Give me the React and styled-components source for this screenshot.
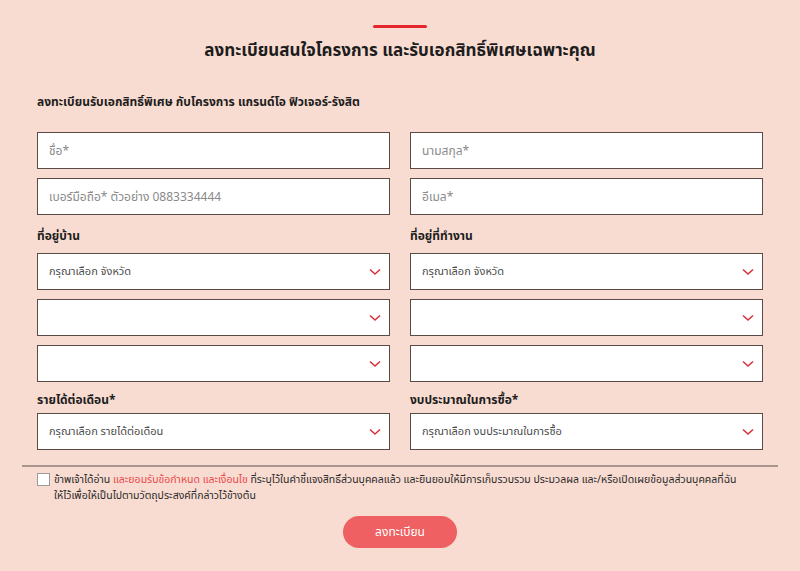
import styled, { createGlobalStyle } from 'styled-components';

const GlobalStyle = createGlobalStyle`
  html, body {
    margin: 0;
    padding: 0;
    background: #f9dcd1;
  }
  body {
    font-family: "Noto Sans Thai", "Noto Sans", "DejaVu Sans", sans-serif;
    color: #1d1d1d;
  }
`;

const Page = styled.div`
  width: 800px;
  height: 571px;
  box-sizing: border-box;
  padding: 25px 37px 0;
  overflow: hidden;
`;

const Accent = styled.div`
  width: 54px;
  height: 3px;
  border-radius: 2px;
  background: #e3262c;
  margin: 0 auto;
`;

const Title = styled.h1`
  margin: 11px 0 0;
  text-align: center;
  font-size: 17px;
  font-weight: 700;
  line-height: 24px;
`;

const Subtitle = styled.h2`
  margin: 30px 0 0;
  font-size: 12px;
  font-weight: 700;
  line-height: 18px;
`;

const Grid = styled.div`
  display: grid;
  grid-template-columns: 1fr 1fr;
  column-gap: 20px;
  margin-top: 21px;
`;

const Column = styled.div`
  display: flex;
  flex-direction: column;
`;

const Field = styled.div`
  position: relative;
  height: 37px;
  box-sizing: border-box;
  border: 1.5px solid #5b4b46;
  background: #fff;
  display: flex;
  align-items: center;
  padding: 0 11px;
  margin-top: ${p => p.$gap ?? 9}px;
  font-size: ${p => (p.$select ? 11 : 12)}px;
  color: ${p => (p.$select ? '#4a4a4a' : '#8a8a8a')};
`;

const Label = styled.div`
  font-size: 12px;
  font-weight: 700;
  line-height: 16px;
  margin-top: ${p => p.$top}px;
  margin-bottom: ${p => p.$bottom}px;
`;

const Chevron = styled.svg`
  position: absolute;
  right: 8px;
  top: 50%;
  transform: translateY(-50%);
`;

const Divider = styled.div`
  height: 2px;
  background: #a8968f;
  margin: 15px -15px 0;
`;

const Consent = styled.label`
  display: flex;
  gap: 4px;
  margin-top: 5px;
  font-size: 10.5px;
  line-height: 16px;
  color: #2a2a2a;
`;

const Box = styled.span`
  flex: none;
  width: 11px;
  height: 11px;
  margin-top: 1px;
  border: 1px solid #9a9a9a;
  background: #fff;
`;

const Link = styled.span`
  color: #e9484c;
`;

const Button = styled.button`
  display: block;
  margin: 12px auto 0;
  width: 114px;
  height: 32px;
  border: none;
  border-radius: 16px;
  background: #ee6061;
  color: #fff;
  font-family: inherit;
  font-size: 12px;
`;

const Select = ({ text, gap }) => (
  <Field $select $gap={gap}>
    {text}
    <Chevron width="12" height="8" viewBox="0 0 12 8">
      <path d="M1 1.5 L6 6 L11 1.5" fill="none" stroke="#d8323b" strokeWidth="1.6" />
    </Chevron>
  </Field>
);

const App = () => (
  <>
    <GlobalStyle />
    <Page>
      <Accent />
      <Title>ลงทะเบียนสนใจโครงการ และรับเอกสิทธิ์พิเศษเฉพาะคุณ</Title>
      <Subtitle>ลงทะเบียนรับเอกสิทธิ์พิเศษ กับโครงการ แกรนด์โอ ฟิวเจอร์-รังสิต</Subtitle>
      <Grid>
        <Column>
          <Field $gap={0}>ชื่อ*</Field>
          <Field>เบอร์มือถือ* ตัวอย่าง 0883334444</Field>
          <Label $top={13} $bottom={9}>ที่อยู่บ้าน</Label>
          <Select text="กรุณาเลือก จังหวัด" gap={0} />
          <Select />
          <Select />
          <Label $top={10} $bottom={5}>รายได้ต่อเดือน*</Label>
          <Select text="กรุณาเลือก รายได้ต่อเดือน" gap={0} />
        </Column>
        <Column>
          <Field $gap={0}>นามสกุล*</Field>
          <Field>อีเมล*</Field>
          <Label $top={13} $bottom={9}>ที่อยู่ที่ทำงาน</Label>
          <Select text="กรุณาเลือก จังหวัด" gap={0} />
          <Select />
          <Select />
          <Label $top={10} $bottom={5}>งบประมาณในการซื้อ*</Label>
          <Select text="กรุณาเลือก งบประมาณในการซื้อ" gap={0} />
        </Column>
      </Grid>
      <Divider />
      <Consent>
        <Box />
        <span>
          ข้าพเจ้าได้อ่าน <Link>และยอมรับข้อกำหนด และเงื่อนไข</Link> ที่ระบุไว้ในคำชี้แจงสิทธิ์ส่วนบุคคลแล้ว และยินยอมให้มีการเก็บรวบรวม ประมวลผล และ/หรือเปิดเผยข้อมูลส่วนบุคคลที่ฉัน
          <br />
          ให้ไว้เพื่อให้เป็นไปตามวัตถุประสงค์ที่กล่าวไว้ข้างต้น
        </span>
      </Consent>
      <Button>ลงทะเบียน</Button>
    </Page>
  </>
);

export default App;
